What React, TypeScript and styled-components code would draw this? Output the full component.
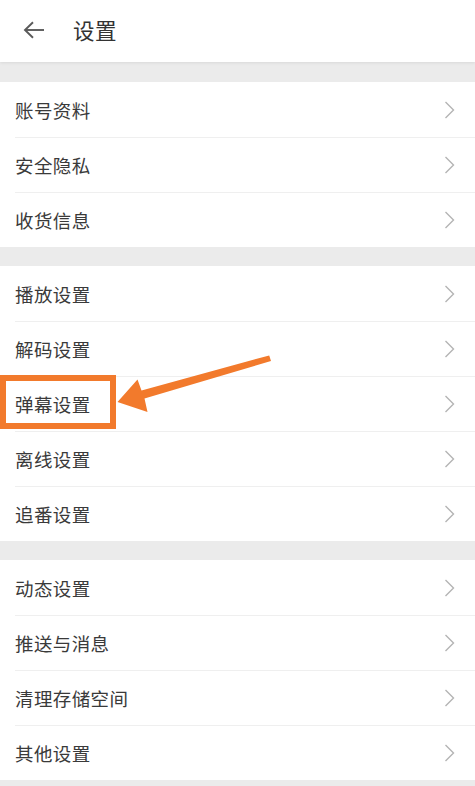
import * as React from 'react'
import styled, {createGlobalStyle} from 'styled-components'

const Global = createGlobalStyle`
  html, body {
    margin: 0;
    padding: 0;
    background: #ebebeb;
  }
  body {
    font-family: 'Noto Sans CJK SC', 'Noto Sans', sans-serif;
    color: #333;
  }
`

const Page = styled.div`
  width: 475px;
  min-height: 786px;
  background: #ebebeb;
  display: flex;
  flex-direction: column;
`

const Header = styled.header`
  height: 62px;
  box-sizing: border-box;
  padding-bottom: 3px;
  background: #fff;
  display: flex;
  align-items: center;
  box-shadow: 0 1px 3px rgba(0, 0, 0, 0.08);
  position: relative;
  z-index: 1;
`

const BackButton = styled.button`
  border: 0;
  background: none;
  padding: 0;
  margin: 0 0 0 23px;
  width: 22px;
  height: 18px;
  display: flex;
  align-items: center;
  justify-content: center;
`

const Title = styled.h1`
  margin: 0 0 0 28px;
  font-size: 21.5px;
  font-weight: 400;
  color: #333;
  letter-spacing: 0.5px;
`

const Group = styled.section<{$gap: number}>`
  margin-top: ${p => p.$gap}px;
  background: #fff;
  display: flex;
  flex-direction: column;
`

const Row = styled.div`
  position: relative;
  height: 55px;
  display: flex;
  align-items: center;
  justify-content: space-between;
  padding: 0 20px 0 15px;
  box-sizing: border-box;

  & + &::before {
    content: '';
    position: absolute;
    top: 0;
    left: 15px;
    right: 0;
    height: 1px;
    background: #efefef;
  }
`

const Label = styled.span`
  font-size: 18.5px;
  color: #3a3a3a;
  letter-spacing: 0.4px;
`

const Highlight = styled.div`
  position: absolute;
  left: 0;
  top: -1px;
  width: 116px;
  height: 54px;
  border: 6px solid #f27a2c;
  box-sizing: border-box;
  pointer-events: none;
`

const Pointer = styled.svg`
  position: absolute;
  left: 0;
  top: -30px;
  width: 300px;
  height: 90px;
  overflow: visible;
  pointer-events: none;
  z-index: 2;
`

function Chevron(){
  return (
    <svg width='11' height='18' viewBox='0 0 11 18'>
      <polyline points='1.5,1 9.5,9 1.5,17' fill='none' stroke='#b4b4b4' strokeWidth='1.4' />
    </svg>
  )
}

function BackArrow(){
  return (
    <svg width='22' height='18' viewBox='0 0 22 18'>
      <line x1='2' y1='9' x2='21' y2='9' stroke='#5a5a5a' strokeWidth='1.9' />
      <polyline points='10,1.3 2,9 10,16.7' fill='none' stroke='#5a5a5a' strokeWidth='1.9' />
    </svg>
  )
}

// arrow drawn in page coordinates, shifted into the row (row top = 377, svg top = -30)
function OrangeArrow(){
  const oy = 30 - 377
  const p = (x: number, y: number) => `${x},${y + oy}`
  return (
    <Pointer viewBox='0 0 300 90'>
      <polygon
        fill='#f27a2c'
        points={[
          p(271, 362),
          p(269.2, 356.4),
          p(141.5, 391.5),
          p(137.5, 380.5),
          p(117.5, 403),
          p(147.5, 413),
          p(144.5, 399.5),
        ].join(' ')}
      />
    </Pointer>
  )
}

type Item = {label: string, marked?: boolean}

const groups: {gap: number, items: Item[]}[] = [
  {gap: 20, items: [{label: '账号资料'}, {label: '安全隐私'}, {label: '收货信息'}]},
  {gap: 19, items: [
    {label: '播放设置'},
    {label: '解码设置'},
    {label: '弹幕设置', marked: true},
    {label: '离线设置'},
    {label: '追番设置'},
  ]},
  {gap: 19, items: [
    {label: '动态设置'},
    {label: '推送与消息'},
    {label: '清理存储空间'},
    {label: '其他设置'},
  ]},
]

export default function App(){
  return (
    <Page>
      <Global />
      <Header>
        <BackButton aria-label='返回'>
          <BackArrow />
        </BackButton>
        <Title>设置</Title>
      </Header>
      {groups.map((g, gi) => (
        <Group key={gi} $gap={g.gap}>
          {g.items.map(item => (
            <Row key={item.label}>
              <Label>{item.label}</Label>
              <Chevron />
              {item.marked && <Highlight />}
              {item.marked && <OrangeArrow />}
            </Row>
          ))}
        </Group>
      ))}
    </Page>
  )
}
